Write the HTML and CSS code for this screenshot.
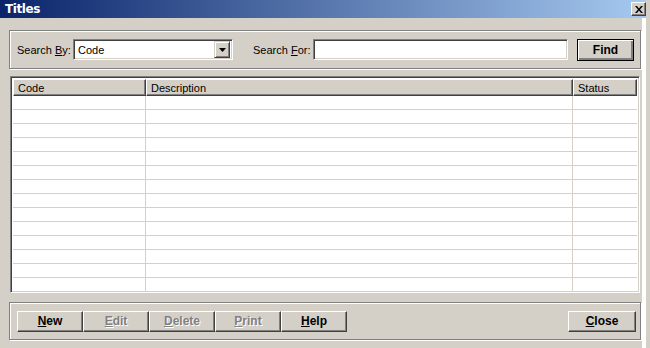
FILE: index.html
```html
<!DOCTYPE html>
<html lang="en">
<head>
    <meta charset="UTF-8">
    <title>Titles</title>
    <link rel="stylesheet" href="styles.css">
</head>
<body>
    <div class="window">
        <div class="titlebar">
            <span class="title">Titles</span>
            <button class="close-x" type="button">
                <svg width="8" height="7" viewBox="0 0 8 7"><path d="M0 0h2l2 2.5L6 0h2L5 3.5 8 7H6L4 4.5 2 7H0l3-3.5z" fill="#000"/></svg>
            </button>
        </div>

        <div class="content">
            <!-- search box -->
            <div class="group search-group">
                <label class="lbl lbl-by">Search <u>B</u>y:</label>
                <div class="combo">
                    <span class="combo-text">Code</span>
                    <span class="combo-btn">
                        <svg width="7" height="4" viewBox="0 0 7 4"><path d="M0 0h7L3.5 4z" fill="#000"/></svg>
                    </span>
                </div>
                <label class="lbl lbl-for">Search <u>F</u>or:</label>
                <div class="textbox"></div>
                <button class="btn find-btn" type="button">Find</button>
            </div>

            <!-- list -->
            <div class="list">
                <div class="list-head">
                    <div class="hcell col-code">Code</div>
                    <div class="hcell col-desc">Description</div>
                    <div class="hcell col-status">Status</div>
                </div>
                <div class="list-body" id="list-body"></div>
            </div>

            <!-- buttons -->
            <div class="group button-group">
                <div class="btn-row">
                    <button class="btn" type="button"><u>N</u>ew</button>
                    <button class="btn disabled" type="button"><u>E</u>dit</button>
                    <button class="btn disabled" type="button"><u>D</u>elete</button>
                    <button class="btn disabled" type="button"><u>P</u>rint</button>
                    <button class="btn" type="button"><u>H</u>elp</button>
                </div>
                <button class="btn close-btn" type="button"><u>C</u>lose</button>
            </div>
        </div>
    </div>

    <script>
        const body = document.getElementById('list-body');
        for (let i = 0; i < 14; i++) {
            const row = document.createElement('div');
            row.className = 'row';
            row.innerHTML = '<div class="cell col-code"></div><div class="cell col-desc"></div><div class="cell col-status"></div>';
            body.appendChild(row);
        }
    </script>
</body>
</html>
```

FILE: styles.css
```css
body {
    margin: 0;
    background: #d4d0c8;
    font-family: "Liberation Sans", Arial, sans-serif;
    font-size: 11px;
    color: #000;
}
.window {
    width: 650px;
    height: 348px;
    box-sizing: border-box;
    border-right: 4px solid #d4d0c8;
    box-shadow: inset -4px 0 0 #fff, inset -2px 0 0 #808080;
    overflow: hidden;
}
.titlebar {
    height: 18px;
    background: linear-gradient(to right, #0a246a, #a6caf0);
    display: flex;
    align-items: center;
    justify-content: space-between;
    padding: 0 4px 0 5px;
    margin-right: -4px;
}
.title {
    color: #fff;
    font-weight: bold;
    font-size: 12px;
    font-family: "DejaVu Sans", sans-serif;
    letter-spacing: -0.4px;
}
.close-x {
    width: 15px;
    height: 14px;
    padding: 0;
    background: #d4d0c8;
    border: 1px solid;
    border-color: #fff #404040 #404040 #fff;
    box-shadow: inset -1px -1px 0 #808080;
    display: flex;
    align-items: center;
    justify-content: center;
}
.content {
    padding: 12px 0 0 9px;
}
.group {
    border: 1px solid #808080;
    box-shadow: 1px 1px 0 #fff, inset 1px 1px 0 #fff;
    display: flex;
    align-items: center;
    box-sizing: border-box;
    width: 632px;
}
.search-group {
    height: 39px;
    padding: 0 0 0 7px;
}
.search-group > * {
    flex-shrink: 0;
}
.lbl {
    white-space: nowrap;
}
.lbl-by {
    width: 56px;
}
.lbl-for {
    width: 60px;
    margin-left: 20px;
}
.combo {
    width: 160px;
    height: 21px;
    box-sizing: border-box;
    background: #fff;
    border: 1px solid;
    border-color: #808080 #fff #fff #808080;
    box-shadow: inset 1px 1px 0 #404040, inset -1px -1px 0 #d4d0c8;
    display: flex;
    align-items: center;
    justify-content: space-between;
    padding: 2px;
}
.combo-text {
    padding-left: 2px;
}
.combo-btn {
    width: 16px;
    height: 17px;
    box-sizing: border-box;
    background: #d4d0c8;
    border: 1px solid;
    border-color: #d4d0c8 #404040 #404040 #d4d0c8;
    box-shadow: inset 1px 1px 0 #fff, inset -1px -1px 0 #808080;
    display: flex;
    align-items: center;
    justify-content: center;
}
.textbox {
    width: 255px;
    height: 21px;
    box-sizing: border-box;
    background: #fff;
    border: 1px solid;
    border-color: #808080 #fff #fff #808080;
    box-shadow: inset 1px 1px 0 #404040, inset -1px -1px 0 #d4d0c8;
}
.btn {
    height: 21px;
    box-sizing: border-box;
    background: #d4d0c8;
    border: 1px solid;
    border-color: #fff #404040 #404040 #fff;
    box-shadow: inset -1px -1px 0 #808080;
    font-family: "Liberation Sans", Arial, sans-serif;
    font-weight: bold;
    font-size: 12px;
    padding: 0;
    color: #000;
}
.find-btn {
    width: 57px;
    height: 22px;
    margin-left: 9px;
    border: 1px solid #000;
    box-shadow: inset 1px 1px 0 #fff, inset -2px -2px 0 #808080, inset -1px -1px 0 #404040;
}
.disabled {
    color: #808080;
    text-shadow: 1px 1px 0 #fff;
}

/* list view */
.list {
    width: 630px;
    height: 217px;
    box-sizing: border-box;
    margin: 7px 0 9px 1px;
    border: 1px solid;
    border-color: #808080 #fff #fff #808080;
    box-shadow: inset 1px 1px 0 #404040, inset -1px -1px 0 #d4d0c8;
    padding: 2px;
    background: #fff;
    overflow: hidden;
}
.list-head {
    display: flex;
    height: 17px;
}
.hcell {
    box-sizing: border-box;
    height: 17px;
    background: #d4d0c8;
    border: 1px solid;
    border-color: #fff #404040 #404040 #fff;
    box-shadow: inset -1px -1px 0 #808080;
    padding: 1px 4px 0;
    line-height: 14px;
}
.col-code { width: 133px; }
.col-desc { width: 427px; }
.col-status { width: 64px; }
.row {
    display: flex;
    height: 14px;
}
.cell {
    box-sizing: border-box;
    height: 14px;
    border-bottom: 1px solid #d4d0c8;
}
.cell.col-code,
.cell.col-desc {
    border-right: 1px solid #d4d0c8;
}

/* bottom buttons */
.button-group {
    height: 38px;
    padding: 0 4px 0 7px;
    justify-content: space-between;
}
.btn-row {
    display: flex;
}
.btn-row .btn {
    width: 66px;
}
.close-btn {
    width: 68px;
}
```
